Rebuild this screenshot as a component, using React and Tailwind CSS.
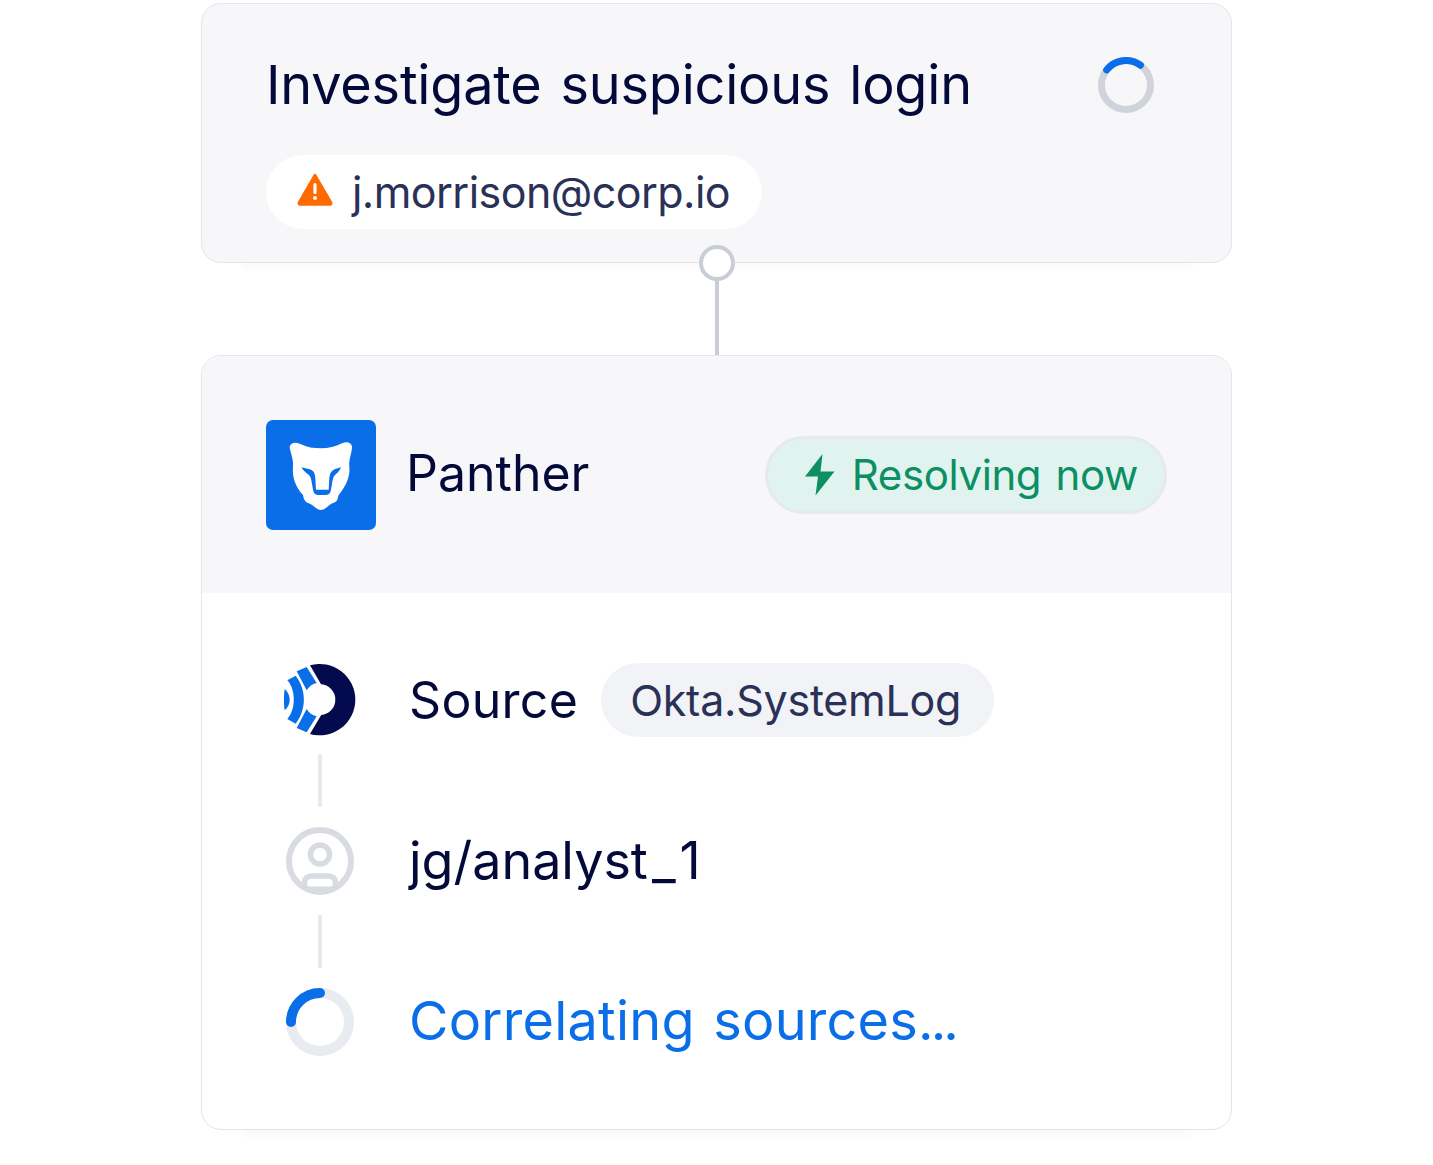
import React from 'react';

function Spinner({ size, stroke, track, arc }) {
    const r = (size - stroke) / 2;
    const c = size / 2;
    const p = (deg) => {
        const a = (deg * Math.PI) / 180;
        return `${c + r * Math.sin(a)} ${c - r * Math.cos(a)}`;
    };
    return (
        <svg width={size} height={size} viewBox={`0 0 ${size} ${size}`} fill="none">
            <circle cx={c} cy={c} r={r} stroke={track} strokeWidth={stroke} />
            <path d={`M${p(arc[0])} A${r} ${r} 0 0 1 ${p(arc[1])}`} stroke="#0a6ee8" strokeWidth={stroke} strokeLinecap="round" />
        </svg>
    );
}

function PantherLogo() {
    return (
        <div className="w-[110px] h-[110px] rounded-[7px] bg-[#0a6ee8] shrink-0">
            <svg width="110" height="110" viewBox="47 45 330 330" fill="none">
                <path d="M118 125C122 112 135 110 150 117C170 127 190 130 212 130C235 130 255 125 275 115C290 108 303 112 305 125C305 145 295 160 297 185C300 210 290 240 265 270C262 280 262 290 250 293C235 298 225 315 212 315C198 315 190 300 175 295C163 290 160 282 158 270C135 245 125 215 128 185C130 160 120 145 118 125Z" fill="#fff" />
                <path d="M153 187C165 190 180 192 187 197C193 202 194 210 195 220L197 254H235L237 220C238 210 240 202 246 197C252 192 262 190 272 187C268 200 255 208 250 215C246 225 244 245 241 258C238 268 232 270 225 270H205C198 270 192 268 189 258C186 245 184 225 180 215C175 208 160 200 153 187Z" fill="#0a6ee8" />
            </svg>
        </div>
    );
}

function SourceLogo() {
    return (
        <svg width="72" height="72" viewBox="40 43 216 216" fill="none">
            <path d="M118 47A107 107 0 1 1 118 253L152 195V105Z" fill="#030a4d" />
            <circle cx="148" cy="150" r="46" fill="#fff" />
            <path d="M78 65L108 52L138 100C125 103 115 110 108 122Z" fill="#0a6ee8" />
            <path d="M78 235L108 248L138 200C125 197 115 190 108 178Z" fill="#0a6ee8" />
            <path d="M50 92L75 78C108 120 108 180 75 222L50 208C76 180 76 120 50 92Z" fill="#0a6ee8" />
            <path d="M42 118C62 135 62 165 42 182C39 165 39 135 42 118Z" fill="#0a6ee8" />
        </svg>
    );
}

function UserIcon() {
    return (
        <svg width="68" height="68" viewBox="0 0 68 68" fill="none" stroke="#d8dbe0" strokeWidth="6">
            <circle cx="34" cy="34" r="31" />
            <circle cx="34" cy="27.500" r="9.500" strokeWidth="5.500" />
            <path d="M19 60C17 52 21 49 26 49H42C47 49 51 52 49 60" strokeWidth="5.500" />
            <path d="M21 62H47" strokeWidth="5" />
        </svg>
    );
}

export default function App() {
    return (
        <div className="min-h-[1165px] bg-white flex flex-col items-center pt-[3px] font-['Inter',sans-serif]">
            {/* Top card */}
            <div className="relative z-10 w-[1031px] h-[260px] rounded-[20px] border border-[#e3e5ea] bg-[#f7f7fa] pl-[64px] pr-[76px] shadow-[0_47px_4px_-40px_rgba(0,0,0,0.018)]">
                <div className="flex items-center justify-between pt-[46px] h-[116px]">
                    <div className="text-[54px] leading-[68px] text-[#030a3a] tracking-[-0.2px] [word-spacing:4px]">Investigate suspicious login</div>
                    <div className="-translate-x-[1px]"><Spinner size={56} stroke={7} track="#d0d4da" arc={[-52, 36]} /></div>
                </div>
                <div className="mt-[35px] inline-flex items-center h-[74px] rounded-full bg-white pl-[31px] pr-[32px]">
                    <svg width="36" height="33" viewBox="0 0 36 33" className="mr-[19px] -mt-[5px]">
                        <path d="M18 2L34 29.500C34.500 30.500 34 31.500 33 31.500H3C2 31.500 1.500 30.500 2 29.500Z" fill="#ff6a00" stroke="#ff6a00" strokeWidth="2.500" strokeLinejoin="round" />
                        <rect x="16.400" y="10" width="3.200" height="11" rx="1.500" fill="#fff" />
                        <circle cx="18" cy="25" r="2" fill="#fff" />
                    </svg>
                    <span className="text-[43px] leading-none tracking-[-0.55px] text-[#2a3157]">j.morrison@corp.io</span>
                </div>
                {/* Connector dot sits over the card edge */}
                <div className="absolute left-[497px] top-[241px] w-[36px] h-[36px] rounded-full border-[4px] border-[#c9ced6] bg-white" />
            </div>

            <div className="w-[4px] h-[92px] bg-[#c9ced6]" />

            {/* Agent card */}
            <div className="w-[1031px] h-[775px] rounded-[20px] border border-[#e3e5ea] bg-white overflow-hidden shadow-[0_47px_4px_-40px_rgba(0,0,0,0.018)]">
                <div className="h-[237px] bg-[#f7f7fa] pl-[64px] pr-[64px] flex items-center justify-between">
                    <div className="flex items-center gap-[30px]">
                        <PantherLogo />
                        <span className="text-[50px] leading-none text-[#030a3a] -mt-[4px]">Panther</span>
                    </div>
                    <div className="flex items-center h-[78px] rounded-full bg-[#e0f3ef] border-[3px] border-[#e6e9ef] pl-[37px] pr-[26px]">
                        <svg width="30" height="42" viewBox="0 0 30 42" className="mr-[17px]">
                            <path d="M17.500 0L0 22.500H13L10.500 41.500L29.500 17.500H15.500Z" fill="#0b8f63" />
                        </svg>
                        <span className="text-[42px] leading-none tracking-[-0.4px] [word-spacing:3px] text-[#0b8f63]">Resolving now</span>
                    </div>
                </div>

                <div className="pl-[82px] pt-[70px] flex flex-col">
                    <div className="flex items-center h-[74px]">
                        <div className="w-[72px] flex justify-center shrink-0"><SourceLogo /></div>
                        <span className="ml-[53px] text-[50px] leading-none tracking-[0.3px] text-[#030a3a]">Source</span>
                        <span className="ml-[23px] flex items-center h-[74px] rounded-full bg-[#f2f3f6] pl-[29px] pr-[33px] text-[43px] leading-none tracking-[-0.25px] text-[#2a3157]">Okta.SystemLog</span>
                    </div>
                    <div className="w-[72px] flex justify-center mt-[17px]"><div className="w-[4px] h-[53px] bg-[#e8eaef]" /></div>
                    <div className="flex items-center h-[68px] mt-[20px]">
                        <div className="w-[72px] flex justify-center shrink-0"><UserIcon /></div>
                        <span className="ml-[53px] text-[52px] leading-none text-[#030a3a]">
                            jg/analyst<span className="ml-[4px] mr-[4px]">_</span><span>1</span>
                        </span>
                    </div>
                    <div className="w-[72px] flex justify-center mt-[20px]"><div className="w-[4px] h-[53px] bg-[#e8eaef]" /></div>
                    <div className="flex items-center h-[68px] mt-[20px]">
                        <div className="w-[72px] flex justify-center shrink-0">
                            <Spinner size={68} stroke={10} track="#e8ebf0" arc={[-90, 0]} />
                        </div>
                        <span className="ml-[53px] text-[54px] leading-none tracking-[0.25px] [word-spacing:3px] text-[#0a6ee8] -mt-[2px]">
                            Correlating sources<span className="tracking-[-3px]">...</span>
                        </span>
                    </div>
                </div>
            </div>
        </div>
    );
}
